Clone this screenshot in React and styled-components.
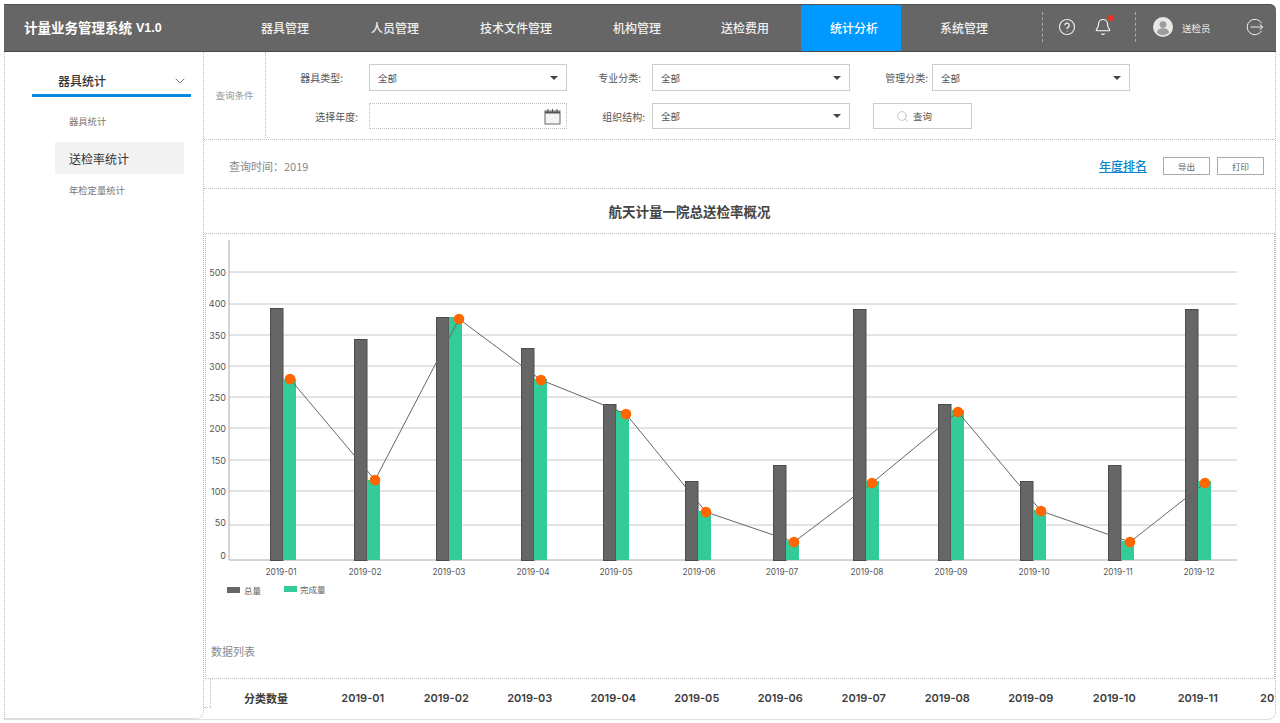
import React from "react";
import styled, { createGlobalStyle } from "styled-components";
import { Bell, ChevronDown, Search } from "lucide-react";

const Global = createGlobalStyle`
  html, body { margin: 0; height: 723px; overflow: hidden; background: #fff; }
  body { font-family: "Noto Sans CJK SC", Inter, sans-serif; color: #555; }
  * { box-sizing: border-box; }
`;

const DASH = "1px dotted #bdbdbd";

const Page = styled.div`
  width: 1280px; height: 720px; padding: 4px 4px 0; display: flex; flex-direction: column;
`;
const Header = styled.header`
  height: 48px; flex: none; display: flex; align-items: stretch; background: #666;
  border-top: 1px solid #4f4f4f; border-bottom: 1px solid #4a4a4a; border-top-right-radius: 6px; color: #fff;
`;
const Brand = styled.div`
  width: 223px; padding: 0 0 2px 20px; display: flex; align-items: center; gap: 4px;
  font: 700 13.5px "Noto Sans CJK SC", sans-serif; color: #fff; white-space: nowrap;
`;
const Version = styled.span`
  font: 700 12.5px "Liberation Sans", sans-serif; margin-top: 2px;
`;
const NavItem = styled.div`
  width: ${p => p.$w}px; display: flex; align-items: center; justify-content: center;
  padding: 0 0 2px ${p => (p.$active ? 6 : 0)}px;
  font-size: 12px; font-weight: 500; color: ${p => (p.$active ? "#fff" : "#f0f0f0")};
  background: ${p => (p.$active ? "#0099ff" : "transparent")};
`;
const Tools = styled.div`
  flex: 1; display: flex; align-items: center; padding-left: 15px; position: relative;
`;
const Divider = styled.span`
  width: 0; height: 30px; border-left: 1px dashed #aaa; margin-right: ${p => p.$mr}px; margin-top: -3px;
`;
const ToolIcon = styled.span`
  display: flex; margin-right: ${p => p.$mr}px; position: relative; margin-top: -3px; color: #fff;
`;
const RedDot = styled.i`
  position: absolute; top: -3px; right: -2px; width: 6px; height: 6px; border-radius: 50%; background: #f0311e;
`;
const UserName = styled.span`
  font-size: 9.5px; color: #eee; margin: 0 35px 0 9px;
`;
const Body = styled.div`
  flex: 1; display: flex; min-height: 0; border-right: ${DASH}; border-bottom: ${DASH}; border-bottom-right-radius: 8px;
`;
const Sidebar = styled.aside`
  width: 200px; flex: none; border-left: ${DASH}; border-right: ${DASH}; border-bottom: ${DASH};
  border-bottom-right-radius: 8px; padding: 18px 0 0 27px;
`;
const SideHead = styled.div`
  width: 159px; height: 27px; display: flex; align-items: flex-start; justify-content: space-between;
  padding: 0 3px 0 26px; border-bottom: 3px solid #0a8be0; font-size: 12px; font-weight: 500; color: #333; line-height: 22px;
`;
const Chevron = styled(ChevronDown)`
  margin-top: 3px; color: #333;
`;
const SideItem = styled.div`
  margin-left: ${p => (p.$active ? 23 : 37)}px; width: ${p => (p.$active ? "129px" : "auto")};
  height: ${p => (p.$active ? 32 : 16)}px; margin-top: ${p => p.$mt}px;
  padding-left: ${p => (p.$active ? 14 : 0)}px; display: flex; align-items: center;
  background: ${p => (p.$active ? "#f2f2f2" : "transparent")};
  font-size: ${p => (p.$active ? 12 : 9.3)}px; color: ${p => (p.$active ? "#333" : "#777")};
`;
const Main = styled.main`
  flex: 1; min-width: 0; display: flex; flex-direction: column; overflow: hidden;
`;
const QueryBar = styled.section`
  height: 88px; flex: none; display: flex; border-bottom: ${DASH};
`;
const QueryLabel = styled.div`
  width: 62px; height: 86px; flex: none; display: flex; align-items: center; justify-content: center;
  border-right: ${DASH}; font-size: 9.5px; color: #999;
`;
const QueryGrid = styled.div`
  display: grid; grid-template-columns: 103px 198px 85px 198px 82px 198px; grid-template-rows: 27px 26px;
  row-gap: 12px; padding-top: 12px;
`;
const FieldLabel = styled.label`
  display: flex; align-items: center; justify-content: flex-end; padding-right: ${p => p.$pr}px;
  font-size: 10px; color: #555; white-space: nowrap;
`;
const Select = styled.div`
  display: flex; align-items: center; justify-content: space-between; padding: 0 8px;
  border: 1px solid #ccc; font-size: 9.5px; color: #555; background: #fff;
  &::after { content: ""; border: 4.5px solid transparent; border-top: 4px solid #444; border-bottom: 0; }
`;
const DateInput = styled.div`
  display: flex; align-items: center; justify-content: flex-end; padding-right: 5px; border: ${DASH};
`;
const SearchBtn = styled.button`
  grid-column: 5 / span 2; margin-left: 23px; width: 99px; display: flex; align-items: center; gap: 4px;
  border: 1px solid #ccc; background: #fff; font: 9.5px "Noto Sans CJK SC", sans-serif; color: #555; padding: 0 0 0 22px;
`;
const InfoRow = styled.section`
  height: 49px; flex: none; display: flex; align-items: center; padding: 3px 11px 0 25px; border-bottom: ${DASH};
`;
const InfoText = styled.span`
  flex: 1; font-size: 11px; color: #888;
`;
const RankLink = styled.a`
  font-size: 12px; font-weight: 500; color: #0a84c8; text-decoration: underline; margin-right: 16px;
`;
const SmallBtn = styled.button`
  width: 47px; height: 18px; margin-left: ${p => p.$ml || 0}px; padding: 0; background: #fff;
  border: 1px solid #aaa; font: 8.5px "Noto Sans CJK SC", sans-serif; color: #666;
`;
const Title = styled.h1`
  height: 45px; flex: none; margin: 0; padding-right: 100px; display: flex; align-items: center; justify-content: center;
  font-size: 13.5px; font-weight: 700; color: #444; border-bottom: ${DASH};
`;
const ChartPanel = styled.section`
  height: 445px; flex: none; margin-left: 1px; display: flex; flex-direction: column; border-left: ${DASH}; border-right: ${DASH}; border-bottom: ${DASH};
`;
const ChartSvg = styled.svg`
  display: block; flex: none;
`;
const Legend = styled.div`
  display: flex; height: 14px; padding-left: 21px; margin-top: -2px;
`;
const LegendItem = styled.span`
  display: flex; align-items: center; gap: ${p => p.$gap}px; width: ${p => p.$w}px; font-size: 8.5px; color: #666;
  transform: translateY(${p => p.$dy}px);
`;
const Swatch = styled.i`
  width: 13px; height: 6px; background: ${p => p.$c};
`;
const DataTitle = styled.div`
  margin: 47px 0 0 5px; font-size: 11px; color: #888;
`;
const TableWrap = styled.div`
  position: relative; height: 29px; flex: none; margin-left: 6px; border-left: ${DASH};
  &::after { content: ""; position: absolute; left: -7px; bottom: 0; width: 6px; border-top: ${DASH}; }
`;
const TableHead = styled.div`
  display: flex; height: 38px; align-items: center; white-space: nowrap; overflow: hidden;
`;
const HeadCell = styled.div`
  flex: none; width: ${p => p.$w}px; text-align: center; font: 600 11px Inter, "Noto Sans CJK SC", sans-serif; color: #3c3c3c;
`;

const NAV = [["器具管理",116],["人员管理",104],["技术文件管理",138],["机构管理",104],["送检费用",112],["统计分析",100,true],["系统管理",126]];
const GRID = [[272,500],[304,400],[335,350],[366,300],[397,250],[428,200],[460,150],[491,100],[525,50]];
const YL = [[273,500],[304,400],[336,350],[367,300],[398,250],[429,200],[461,150],[492,100],[523,50],[556,0]];
const DATA = [
  ["2019-01",281,270,308,379,290,379],
  ["2019-02",365,354,339,480,375,480],
  ["2019-03",449,436,317,317,459,319],
  ["2019-04",533,521,348,379,541,380],
  ["2019-05",616,603,404,411,626,414],
  ["2019-06",699,685,481,511,706,512],
  ["2019-07",782,773,465,541,794,542],
  ["2019-08",867,853,309,481,872,483],
  ["2019-09",951,938,404,410,958,412],
  ["2019-10",1034,1020,481,510,1041,511],
  ["2019-11",1118,1108,465,541,1130,542],
  ["2019-12",1199,1185,309,481,1205,483],
];
const COLS = ["2019-01","2019-02","2019-03","2019-04","2019-05","2019-06","2019-07","2019-08","2019-09","2019-10","2019-11","2019-12"];

const Chart = () => (
  <ChartSvg width="1067" height="350" viewBox="206 234 1067 350">
    {GRID.map(([y]) => <line key={y} x1="229" x2="1237" y1={y} y2={y} stroke="#c8c8c8" />)}
    <line x1="229" x2="229" y1="240" y2="560" stroke="#aaa" />
    <line x1="229" x2="1237" y1="560" y2="560" stroke="#aaa" />
    {YL.map(([y, v]) => (
      <text key={y} x="226" y={y + 3} textAnchor="end" fontSize="9" fontFamily="Inter, sans-serif" fill="#555">{v}</text>
    ))}
    {DATA.map(([l, cx, x, d, g]) => (
      <g key={l}>
        <rect x={x + 0.5} y={d + 0.5} width="12.5" height={560 - d} fill="#666" stroke="#4c4c4c" />
        <rect x={x + 13} y={g} width="13" height={560 - g} fill="#33cc99" />
        <text x={cx} y="575" textAnchor="middle" fontSize="8.3" fontFamily="Inter, sans-serif" fill="#555">{l}</text>
      </g>
    ))}
    <polyline fill="none" stroke="#666" strokeWidth="1" points={DATA.map(r => `${r[5]},${r[6]}`).join(" ")} />
    {DATA.map(r => <circle key={r[0]} cx={r[5]} cy={r[6]} r="5.3" fill="#ff6600" />)}
  </ChartSvg>
);

const HelpIcon = () => (
  <svg width="18" height="18" viewBox="0 0 18 18" fill="none" stroke="#eee" strokeWidth="1.1">
    <circle cx="9" cy="9" r="7.5" />
    <path d="M6.8 7.2a2.2 2.2 0 1 1 3.4 1.9c-.8.5-1.2.9-1.2 1.9" strokeWidth="1.3" />
    <circle cx="9" cy="13" r=".6" fill="#eee" stroke="none" />
  </svg>
);
const Avatar = () => (
  <svg width="20" height="20" viewBox="0 0 20 20">
    <circle cx="10" cy="10" r="10" fill="#e8e8e8" />
    <circle cx="10" cy="7.6" r="3.4" fill="#9d9d9d" />
    <path d="M3.8 15.6c.6-3.2 3-4.4 6.2-4.4s5.6 1.2 6.2 4.4a8.8 8.8 0 0 1-12.4 0z" fill="#9d9d9d" />
  </svg>
);
const Logout = () => (
  <svg width="18" height="18" viewBox="0 0 18 18" fill="none" stroke="#eee" strokeWidth="1">
    <path d="M15.6 5.2A7.7 7.7 0 1 0 15.6 12.8" />
    <path d="M4.5 9h12.3M13.6 6.2l3.2 2.8-3.2 2.8" />
  </svg>
);
const Calendar = () => (
  <svg width="17" height="17" viewBox="0 0 17 17" fill="none" stroke="#555">
    <rect x="1" y="3" width="15" height="13" fill="#f4f4f4" stroke="#666" />
    <path d="M1 4.5h15" strokeWidth="2" />
    <path d="M4 1v3M8.5 1v3M13 1v3" />
  </svg>
);

export default function App() {
  return (
    <Page>
      <Global />
      <Header>
        <Brand>计量业务管理系统<Version>V1.0</Version></Brand>
        {NAV.map(([t, w, a]) => <NavItem key={t} $w={w} $active={a}>{t}</NavItem>)}
        <Tools>
          <Divider $mr={15} />
          <ToolIcon $mr={18}><HelpIcon /></ToolIcon>
          <ToolIcon $mr={23}><Bell size={18} strokeWidth={1.5} /><RedDot /></ToolIcon>
          <Divider $mr={17} />
          <ToolIcon $mr={0}><Avatar /></ToolIcon>
          <UserName>送检员</UserName>
          <ToolIcon $mr={0}><Logout /></ToolIcon>
        </Tools>
      </Header>
      <Body>
        <Sidebar>
          <SideHead>器具统计<Chevron size={16} strokeWidth={1} /></SideHead>
          <SideItem $mt={16}>器具统计</SideItem>
          <SideItem $active $mt={13}>送检率统计</SideItem>
          <SideItem $mt={8}>年检定量统计</SideItem>
        </Sidebar>
        <Main>
          <QueryBar>
            <QueryLabel>查询条件</QueryLabel>
            <QueryGrid>
              <FieldLabel $pr={26}>器具类型:</FieldLabel>
              <Select>全部</Select>
              <FieldLabel $pr={11}>专业分类:</FieldLabel>
              <Select>全部</Select>
              <FieldLabel $pr={4}>管理分类:</FieldLabel>
              <Select>全部</Select>
              <FieldLabel $pr={11}>选择年度:</FieldLabel>
              <DateInput><Calendar /></DateInput>
              <FieldLabel $pr={7}>组织结构:</FieldLabel>
              <Select>全部</Select>
              <SearchBtn><Search size={13} strokeWidth={0.9} color="#888" />查询</SearchBtn>
            </QueryGrid>
          </QueryBar>
          <InfoRow>
            <InfoText>查询时间{"\uFF1A"}2019</InfoText>
            <RankLink>年度排名</RankLink>
            <SmallBtn>导出</SmallBtn>
            <SmallBtn $ml={7}>打印</SmallBtn>
          </InfoRow>
          <Title>航天计量一院总送检率概况</Title>
          <ChartPanel>
            <Chart />
            <Legend>
              <LegendItem $w={57} $gap={4} $dy={1}><Swatch $c="#666" />总量</LegendItem>
              <LegendItem $w={60} $gap={3} $dy={0}><Swatch $c="#33cc99" />完成量</LegendItem>
            </Legend>
            <DataTitle>数据列表</DataTitle>
          </ChartPanel>
          <TableWrap>
            <TableHead>
              <HeadCell $w={110}>分类数量</HeadCell>
              {COLS.map(c => <HeadCell key={c} $w={83.5}>{c}</HeadCell>)}
            </TableHead>
          </TableWrap>
        </Main>
      </Body>
    </Page>
  );
}
